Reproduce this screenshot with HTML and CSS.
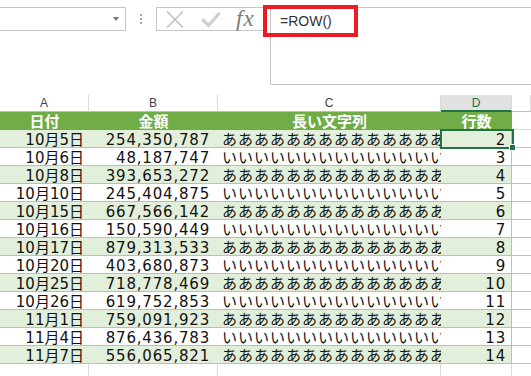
FILE: index.html
```html
<!DOCTYPE html>
<html lang="ja">
<head>
<meta charset="utf-8">
<title>ROW</title>
<link rel="stylesheet" href="styles.css">
</head>
<body>
<div class="bar">
  <div class="namebox"><span class="caret"></span></div>
  <div class="grip"><i></i><i></i><i></i></div>
  <div class="fxbox">
    <svg class="ic-x" width="18" height="17" viewBox="0 0 18 17"><path d="M1 0.5 L17 16.5 M17 0.5 L1 16.5" stroke="#c4c4c4" stroke-width="1.7" fill="none"/></svg>
    <svg class="ic-ok" width="20" height="17" viewBox="0 0 20 17"><path d="M1.5 8.5 L7.5 14.5 L18.5 2" stroke="#cfcfcf" stroke-width="3.2" fill="none"/></svg>
    <span class="fx">fx</span>
  </div>
  <div class="formula"><span class="ftext">=ROW()</span></div>
  <div class="mark"></div>
</div>
<div class="sheet">
  <div class="row colhead"><div>A</div><div>B</div><div>C</div><div class="on">D</div><div></div></div>
  <div class="row thead"><div>日付</div><div>金額</div><div>長い文字列</div><div>行数</div><div class="e"></div></div>
  <div class="row band"><div class="d">10月5日</div><div class="n">254,350,787</div><div class="t">ああああああああああああああああ</div><div class="k active">2</div><div class="e"></div></div>
  <div class="row"><div class="d">10月6日</div><div class="n">48,187,747</div><div class="t">いいいいいいいいいいいいいいいい</div><div class="k">3</div><div class="e"></div></div>
  <div class="row band"><div class="d">10月8日</div><div class="n">393,653,272</div><div class="t">ああああああああああああああああ</div><div class="k">4</div><div class="e"></div></div>
  <div class="row"><div class="d">10月10日</div><div class="n">245,404,875</div><div class="t">いいいいいいいいいいいいいいいい</div><div class="k">5</div><div class="e"></div></div>
  <div class="row band"><div class="d">10月15日</div><div class="n">667,566,142</div><div class="t">ああああああああああああああああ</div><div class="k">6</div><div class="e"></div></div>
  <div class="row"><div class="d">10月16日</div><div class="n">150,590,449</div><div class="t">いいいいいいいいいいいいいいいい</div><div class="k">7</div><div class="e"></div></div>
  <div class="row band"><div class="d">10月17日</div><div class="n">879,313,533</div><div class="t">ああああああああああああああああ</div><div class="k">8</div><div class="e"></div></div>
  <div class="row"><div class="d">10月20日</div><div class="n">403,680,873</div><div class="t">いいいいいいいいいいいいいいいい</div><div class="k">9</div><div class="e"></div></div>
  <div class="row band"><div class="d">10月25日</div><div class="n">718,778,469</div><div class="t">ああああああああああああああああ</div><div class="k">10</div><div class="e"></div></div>
  <div class="row"><div class="d">10月26日</div><div class="n">619,752,853</div><div class="t">いいいいいいいいいいいいいいいい</div><div class="k">11</div><div class="e"></div></div>
  <div class="row band"><div class="d">11月1日</div><div class="n">759,091,923</div><div class="t">ああああああああああああああああ</div><div class="k">12</div><div class="e"></div></div>
  <div class="row"><div class="d">11月4日</div><div class="n">876,436,783</div><div class="t">いいいいいいいいいいいいいいいい</div><div class="k">13</div><div class="e"></div></div>
  <div class="row band"><div class="d">11月7日</div><div class="n">556,065,821</div><div class="t">ああああああああああああああああ</div><div class="k">14</div><div class="e"></div></div>
  <div class="row filler"><div></div><div></div><div></div><div></div><div></div></div>
</div>
</body>
</html>
```

FILE: styles.css
```css
html, body {
  margin: 0;
  padding: 0;
  background: #ffffff;
}
body {
  width: 531px;
  height: 376px;
  overflow: hidden;
  font-family: "Liberation Sans", "Noto Sans CJK JP", sans-serif;
}

/* ---------- formula bar ---------- */
.bar {
  position: relative;
  display: flex;
  align-items: flex-start;
  height: 95px;
  padding-top: 7px;
  box-sizing: border-box;
}
.namebox {
  width: 127px;
  height: 24px;
  margin-left: -1px;
  border: 1px solid #c6c6c6;
  box-sizing: border-box;
  display: flex;
  justify-content: flex-end;
  align-items: center;
  padding-right: 6px;
  flex: none;
}
.caret {
  width: 0;
  height: 0;
  border-left: 3.5px solid transparent;
  border-right: 3.5px solid transparent;
  border-top: 4px solid #777777;
}
.grip {
  width: 30px;
  height: 24px;
  flex: none;
  display: flex;
  flex-direction: column;
  align-items: center;
  justify-content: center;
  gap: 2px;
}
.grip i {
  display: block;
  width: 2px;
  height: 2px;
  background: #a6a6a6;
}
.fxbox {
  width: 108px;
  height: 24px;
  flex: none;
  border: 1px solid #c6c6c6;
  box-sizing: border-box;
  display: flex;
  align-items: center;
  padding-left: 9px;
}
.ic-x { flex: none; }
.ic-ok { flex: none; margin-left: 17px; }
.fx {
  margin-left: 15px;
  font-family: "Liberation Serif", serif;
  font-style: italic;
  font-size: 23px;
  line-height: 20px;
  letter-spacing: 1px;
  color: #7a7a7a;
}
.formula {
  flex: 1;
  height: 78px;
  margin-left: 6px;
  margin-right: -2px;
  border: 1px solid #c6c6c6;
  box-sizing: border-box;
  padding: 4px 0 0 9px;
}
.ftext {
  font-family: "Liberation Sans", sans-serif;
  font-size: 14px;
  line-height: 16px;
  color: #333333;
}
.mark {
  position: absolute;
  left: 263px;
  top: 5px;
  width: 95px;
  height: 32px;
  border: 4px solid #ed1c24;
  box-sizing: border-box;
}

/* ---------- sheet ---------- */
.row {
  display: grid;
  grid-template-columns: 89px 129px 223px 71px 1fr;
}
.row > div {
  box-sizing: border-box;
  white-space: nowrap;
}

.colhead > div {
  height: 17px;
  border-right: 1px solid #dadada;
  border-bottom: 1px solid #bdbdbd;
  text-align: center;
  font-family: "Liberation Sans", sans-serif;
  font-size: 12px;
  line-height: 16px;
  color: #444444;
}
.colhead > div.on {
  background: #e1e1e1;
  color: #217346;
  border-bottom: 2px solid #217346;
}

.thead > div {
  height: 18px;
  background: #70ad47;
  color: #ffffff;
  font-family: "Noto Sans CJK JP", sans-serif;
  font-weight: 700;
  font-size: 15px;
  line-height: 18px;
  text-align: center;
}
.thead > div.e {
  background: #ffffff;
  border-bottom: 1px solid #d9d9d9;
}

.row:not(.colhead):not(.thead):not(.filler) > div {
  height: 18px;
  border-bottom: 1px solid #a9d08e;
  font-family: "DejaVu Sans", "Noto Sans CJK JP", sans-serif;
  font-size: 15px;
  line-height: 13px;
  padding-top: 4px;
  color: #111111;
}
.band > div { background: #e2efda; }
.row > div.e {
  background: #ffffff;
  border-bottom-color: #d9d9d9;
}
.d { text-align: right; padding-right: 5px; }
.n { text-align: right; padding-right: 8px; letter-spacing: 0.8px; }
.t {
  text-align: left;
  padding-left: 4px;
  letter-spacing: 1px;
  overflow: hidden;
}
.k {
  text-align: right;
  padding-right: 5px;
  letter-spacing: 0.8px;
  border-right: 1px solid #a9d08e;
}
.active { position: relative; }
.active::before {
  content: "";
  position: absolute;
  left: -1px;
  top: -1px;
  right: -3px;
  bottom: -2px;
  border: 2px solid #217346;
}
.active::after {
  content: "";
  position: absolute;
  left: 68px;
  top: 14px;
  width: 5px;
  height: 5px;
  background: #217346;
  border: 1px solid #ffffff;
}

.filler > div {
  height: 13px;
  border-right: 1px solid #d9d9d9;
}
.filler > div:last-child { border-right: none; }
```
